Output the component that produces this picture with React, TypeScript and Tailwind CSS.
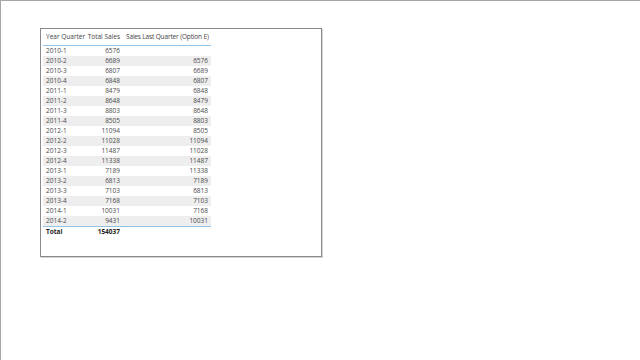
const rows: [string, string, string][] = [
  ["2010-1", "6576", ""],
  ["2010-2", "6689", "6576"],
  ["2010-3", "6807", "6689"],
  ["2010-4", "6848", "6807"],
  ["2011-1", "8479", "6848"],
  ["2011-2", "8648", "8479"],
  ["2011-3", "8803", "8648"],
  ["2011-4", "8505", "8803"],
  ["2012-1", "11094", "8505"],
  ["2012-2", "11028", "11094"],
  ["2012-3", "11487", "11028"],
  ["2012-4", "11338", "11487"],
  ["2013-1", "7189", "11338"],
  ["2013-2", "6813", "7189"],
  ["2013-3", "7103", "6813"],
  ["2013-4", "7168", "7103"],
  ["2014-1", "10031", "7168"],
  ["2014-2", "9431", "10031"],
];

export default function App() {
  return (
    <main className="w-[640px] h-[360px] bg-white border-t border-l border-[#a6a6a6] overflow-hidden font-['Open_Sans',sans-serif]">
      {/* TABLE VISUAL */}
      <div className="ml-[39px] mt-[27px] w-[282px] h-[229px] border border-[#8a8a8a] shadow-[1px_1px_0_#d4d4d4] pl-[2px]">
        <table className="table-fixed w-[168px] border-collapse text-[6.5px] leading-[10px] text-[#4a4a4a]">
          <thead>
            <tr className="h-[16px] border-b border-[#8fc3ea] text-[#3f3f3f]">
              <th className="w-[44px] pl-[3px] font-normal text-left whitespace-nowrap overflow-visible">Year Quarter</th>
              <th className="w-[36px] pr-[3px] font-normal text-right whitespace-nowrap overflow-visible">Total Sales</th>
              <th className="w-[88px] pl-[3px] font-normal text-left whitespace-nowrap overflow-visible tracking-[-0.15px]">Sales Last Quarter (Option E)</th>
            </tr>
          </thead>
          <tbody>
            {rows.map(([q, s, l], i) => (
              <tr
                key={q}
                className={`h-[10px] ${i % 2 === 1 ? "bg-[#eeeeee]" : ""} ${i === rows.length - 1 ? "border-b border-[#8fc3ea]" : ""}`}
              >
                <td className="pl-[3px] whitespace-nowrap">{q}</td>
                <td className="pr-[3px] text-right">{s}</td>
                <td className="pr-[3px] text-right">{l}</td>
              </tr>
            ))}
            <tr className="h-[10px] font-bold text-[#222]">
              <td className="pl-[3px]">Total</td>
              <td className="pr-[3px] text-right">154037</td>
              <td></td>
            </tr>
          </tbody>
        </table>
      </div>
    </main>
  );
}
